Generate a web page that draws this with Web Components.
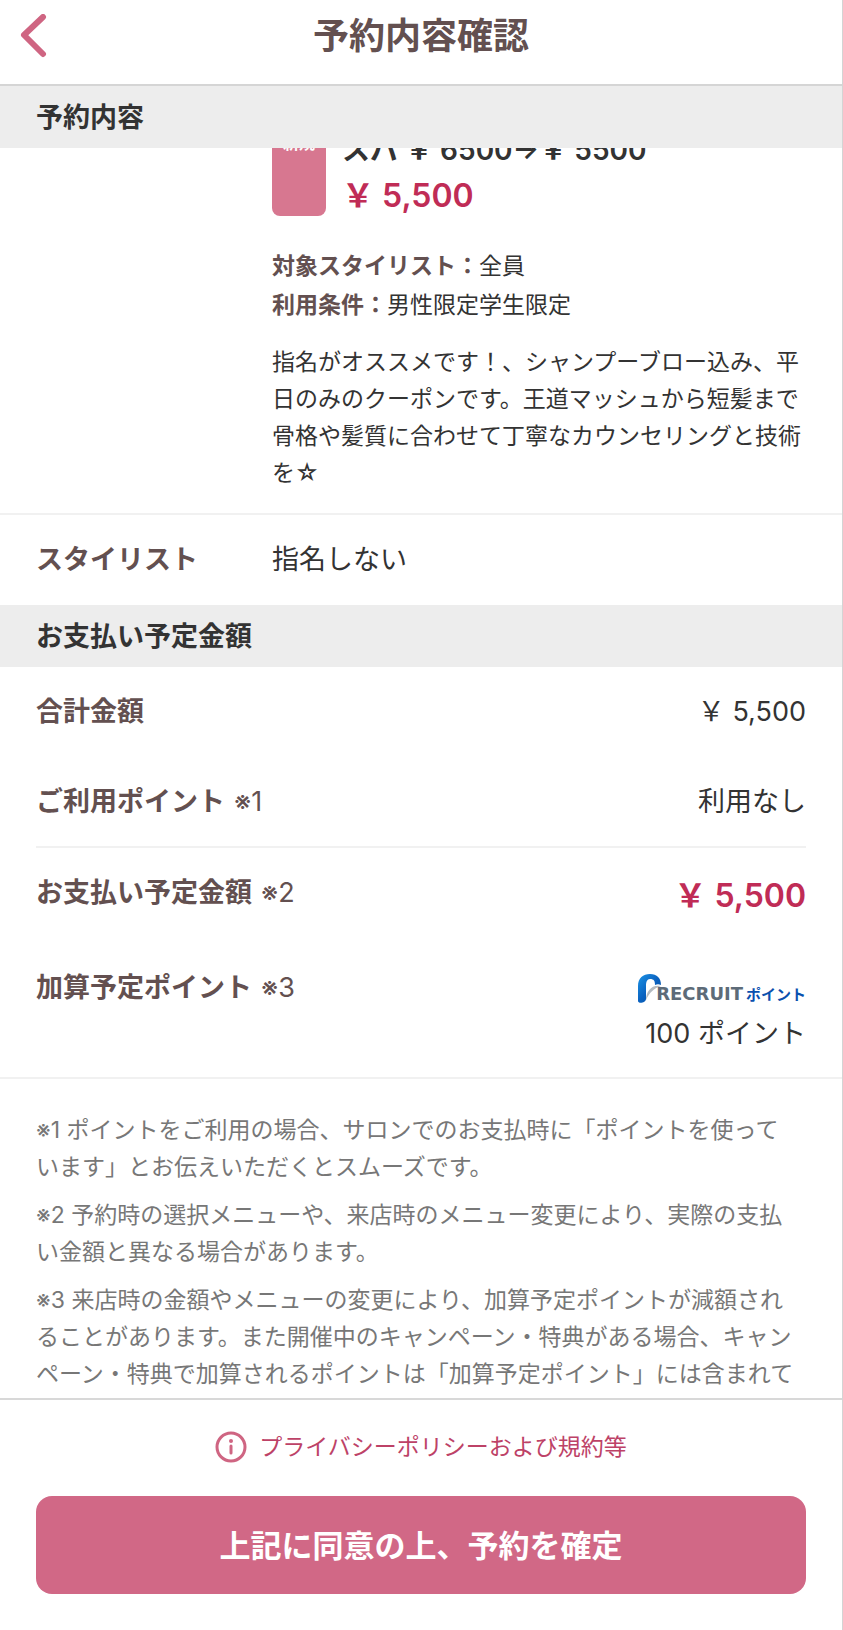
<!DOCTYPE html>
<html lang="ja">
<head>
<meta charset="utf-8">
<meta name="viewport" content="width=device-width, initial-scale=1">
<title>予約内容確認</title>
<style>
html, body { margin: 0; height: 100%; }
body { font-family: Inter, "Noto Sans CJK JP", sans-serif; background: #fff; color: #333; }
</style>
</head>
<body>
<booking-page>
  <app-header slot="header" label="予約内容確認"></app-header>
  <section-title>予約内容</section-title>
  <coupon-card></coupon-card>
  <stylist-row label="スタイリスト">指名しない</stylist-row>
  <section-title>お支払い予定金額</section-title>
  <payment-list></payment-list>
  <payment-notes></payment-notes>
  <confirm-footer slot="footer"></confirm-footer>
</booking-page>
<script>
function define(name, html) {
  const t = document.createElement('template');
  t.innerHTML = html;
  customElements.define(name, class extends HTMLElement {
    constructor() {
      super();
      this.attachShadow({ mode: 'open' }).append(t.content.cloneNode(true));
    }
    connectedCallback() {
      const l = this.shadowRoot.querySelector('[data-label]');
      if (l && this.hasAttribute('label')) l.textContent = this.getAttribute('label');
    }
  });
}

define('booking-page', `
<style>
:host { display: flex; flex-direction: column; height: 100%; box-sizing: border-box; border-right: 1px solid #d4d4d4; }
main { flex: 1; min-height: 0; overflow: hidden; }
</style>
<slot name="header"></slot>
<main><slot></slot></main>
<slot name="footer"></slot>`);

define('app-header', `
<style>
:host { display: grid; grid-template-columns: 64px 1fr 64px; align-items: center; padding: 0 0 12px; height: 72px; border-bottom: 2px solid #d5d5d5; flex: none; }
button { border: 0; background: none; padding: 0 0 0 20px; height: 44px; cursor: pointer; }
svg { display: block; }
h1 { margin: 0; text-align: center; font-size: 36px; line-height: 48px; font-weight: 600; color: #635050; }
</style>
<button type="button" aria-label="戻る"><svg width="28" height="44" viewBox="0 0 28 44" fill="none" stroke="#cf6582" stroke-width="6" stroke-linecap="round" stroke-linejoin="round"><path d="M23 3 4 21 23 40"/></svg></button>
<h1 data-label></h1>`);

define('section-title', `
<style>
:host { display: block; background: #ededed; padding: 12px 36px 10px; }
h2 { margin: 0; font-size: 27px; line-height: 40px; font-weight: 600; color: #333; }
</style>
<h2><slot></slot></h2>`);

define('coupon-card', `
<style>
:host { display: block; padding: 0 36px 21px 272px; border-bottom: 2px solid #f1f1f1; }
.window { height: 68px; overflow: hidden; display: flex; align-items: flex-end; gap: 16px; }
.badge { flex: none; width: 54px; height: 108px; border-radius: 8px; background: #d77790; color: #fff; font-size: 16px; font-weight: 600; line-height: 24px; text-align: center; }
.badge span { display: block; padding-top: 23px; }
.name, .price { margin: 0; white-space: nowrap; }
.name { font-size: 28px; line-height: 40px; font-weight: 600; margin-bottom: 6px; }
.price { font-size: 32px; line-height: 40px; font-weight: 600; color: #c02c56; }
dl { margin: 31px 0 19px; font-size: 23px; line-height: 39px; }
dl div { display: flex; }
dt { font-weight: 600; color: #635050; }
dd { margin: 0; }
p { margin: 0; font-size: 23px; line-height: 37px; }
</style>
<div class="window">
  <div class="badge"><span>新規</span></div>
  <div><p class="name">スパ ￥ 6500→￥ 5500</p><p class="price">￥ 5,500</p></div>
</div>
<dl>
  <div><dt>対象スタイリスト：</dt><dd>全員</dd></div>
  <div><dt>利用条件：</dt><dd>男性限定学生限定</dd></div>
</dl>
<p>指名がオススメです！、シャンプーブロー込み、平日のみのクーポンです。王道マッシュから短髪まで骨格や髪質に合わせて丁寧なカウンセリングと技術を☆</p>`);

define('stylist-row', `
<style>
:host { display: grid; grid-template-columns: 236px 1fr; padding: 25px 36px; font-size: 27px; line-height: 40px; }
b { font-weight: 600; color: #635050; }
</style>
<b data-label></b><span><slot></slot></span>`);

define('recruit-logo', `
<style>
:host { display: flex; align-items: flex-end; justify-content: flex-end; height: 30px; margin: 6px 0 10px; white-space: nowrap; }
svg { flex: none; margin-right: -6px; }
.r { font: 700 18px/20px "DejaVu Sans", sans-serif; color: #5d6b78; margin-right: 3px; }
.p { font: 700 15px/20px "Noto Sans CJK JP", sans-serif; color: #0a50ae; }
</style>
<svg width="24" height="30" viewBox="0 0 24 30" aria-hidden="true">
  <defs><linearGradient id="g" x1="0" y1="0" x2="1" y2="1"><stop offset="0" stop-color="#1c94e6"/><stop offset=".5" stop-color="#0a62c0"/><stop offset="1" stop-color="#064d9c"/></linearGradient></defs>
  <path d="M8 26C8 17 14 10 23 12 16 14 11 19 8 26Z" fill="#b4bac0"/>
  <path d="M0 12C0 4 5 0 12 0s11 4 11 11c-2-1-4-1-6 0 0-4-1-6-5-6-3 0-4 3-4 7v13c0 4-8 5-8 2Z" fill="url(#g)"/>
</svg>
<span class="r">RECRUIT</span><span class="p">ポイント</span>`);

define('payment-list', `
<style>
:host { display: block; border-bottom: 2px solid #f1f1f1; font-size: 27px; line-height: 40px; }
dl { margin: 0 36px; }
.row { display: flex; justify-content: space-between; padding: 25px 0; }
.sum { border-bottom: 2px solid #f1f1f1; padding-bottom: 24px; }
.points { padding: 24px 0 23px; }
dt { font-weight: 600; color: #635050; }
small { font-size: 27px; font-weight: 400; margin-left: 9px; }
dd { margin: 0; text-align: right; }
.total { font-size: 32px; line-height: 46px; font-weight: 600; color: #c02c56; }
</style>
<dl>
  <div class="row"><dt>合計金額</dt><dd>￥ 5,500</dd></div>
  <div class="row sum"><dt>ご利用ポイント<small>※1</small></dt><dd>利用なし</dd></div>
  <div class="row"><dt>お支払い予定金額<small>※2</small></dt><dd class="total">￥ 5,500</dd></div>
  <div class="row points"><dt>加算予定ポイント<small>※3</small></dt><dd><recruit-logo></recruit-logo>100 ポイント</dd></div>
</dl>`);

define('payment-notes', `
<style>
:host { display: flex; flex-direction: column; gap: 11px; padding: 33px 45px 0 36px; font-size: 23px; line-height: 37px; color: #777; }
p { margin: 0; }
</style>
<p>※1 ポイントをご利用の場合、サロンでのお支払時に「ポイントを使っています」とお伝えいただくとスムーズです。</p>
<p>※2 予約時の選択メニューや、来店時のメニュー変更により、実際の支払い金額と異なる場合があります。</p>
<p>※3 来店時の金額やメニューの変更により、加算予定ポイントが減額されることがあります。また開催中のキャンペーン・特典がある場合、キャンペーン・特典で加算されるポイントは「加算予定ポイント」には含まれて</p>`);

define('confirm-footer', `
<style>
:host { display: flex; flex-direction: column; gap: 33px; flex: none; padding: 31px 36px 36px; border-top: 2px solid #d8d8d8; }
a { display: flex; align-self: center; align-items: center; gap: 12px; font-size: 23px; line-height: 32px; color: #bd4267; text-decoration: none; }
button { border: 0; border-radius: 16px; height: 98px; padding: 0 0 4px; background: #d16886; color: #fff; font: inherit; font-size: 31px; font-weight: 600; cursor: pointer; }
</style>
<a href="#privacy"><svg width="32" height="32" viewBox="0 0 32 32" aria-hidden="true"><circle cx="16" cy="16" r="14" fill="none" stroke="#cf6582" stroke-width="3"/><circle cx="16" cy="10" r="2" fill="#cf6582"/><path d="M16 15v7" stroke="#cf6582" stroke-width="3" stroke-linecap="round"/></svg><span>プライバシーポリシーおよび規約等</span></a>
<button type="button">上記に同意の上、予約を確定</button>`);
</script>
</body>
</html>
